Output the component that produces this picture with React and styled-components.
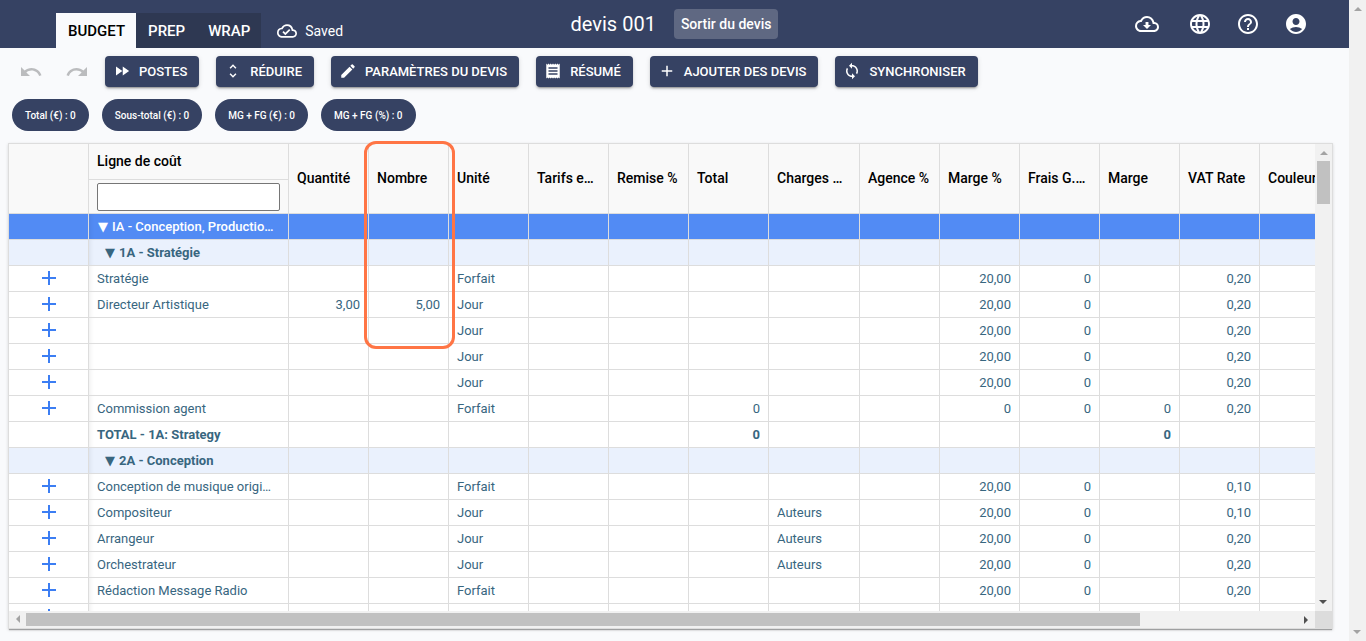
import React, { useState } from "react";
import styled, { createGlobalStyle, css } from "styled-components";
import {
  MdAccountCircle,
  MdAdd,
  MdEdit,
  MdFastForward,
  MdHelpOutline,
  MdLanguage,
  MdLoop,
  MdOutlineCloudDone,
  MdOutlineCloudDownload,
  MdReceipt,
  MdRedo,
  MdUndo,
  MdUnfoldMore,
} from "react-icons/md";

const actions = [
  { label: "Postes", icon: MdFastForward },
  { label: "Réduire", icon: MdUnfoldMore },
  { label: "Paramètres du devis", icon: MdEdit },
  { label: "Résumé", icon: MdReceipt },
  { label: "Ajouter des devis", icon: MdAdd },
  { label: "Synchroniser", icon: MdLoop },
];

const totals = ["Total (€) : 0", "Sous-total (€) : 0", "MG + FG (€) : 0", "MG + FG (%) : 0"];

const columns = [
  { key: "add", label: "", width: 80 },
  { key: "line", label: "Ligne de coût", width: 200, filter: true },
  { key: "qty", label: "Quantité", width: 80, right: true },
  { key: "nb", label: "Nombre", width: 80, right: true },
  { key: "unit", label: "Unité", width: 80 },
  { key: "rate", label: "Tarifs e…", width: 80, right: true },
  { key: "discount", label: "Remise %", width: 80, right: true },
  { key: "total", label: "Total", width: 80, right: true },
  { key: "charges", label: "Charges …", width: 91 },
  { key: "agency", label: "Agence %", width: 80, right: true },
  { key: "margin", label: "Marge %", width: 80, right: true },
  { key: "fees", label: "Frais G.…", width: 80, right: true },
  { key: "marginTotal", label: "Marge", width: 80, right: true },
  { key: "vat", label: "VAT Rate", width: 80, right: true },
  { key: "color", label: "Couleur", width: 80 },
];

const item = (line, unit, more) => ({ line, unit, margin: "20,00", fees: "0", vat: "0,20", ...more });

const rows = [
  { kind: "section", line: "IA - Conception, Productio…" },
  { kind: "group", line: "1A - Stratégie" },
  item("Stratégie", "Forfait"),
  item("Directeur Artistique", "Jour", { qty: "3,00", nb: "5,00" }),
  item("", "Jour"),
  item("", "Jour"),
  item("", "Jour"),
  item("Commission agent", "Forfait", { total: "0", margin: "0", marginTotal: "0" }),
  { kind: "total", line: "TOTAL - 1A: Strategy", total: "0", marginTotal: "0" },
  { kind: "group", line: "2A - Conception" },
  item("Conception de musique origi…", "Forfait", { vat: "0,10" }),
  item("Compositeur", "Jour", { charges: "Auteurs", vat: "0,10" }),
  item("Arrangeur", "Jour", { charges: "Auteurs" }),
  item("Orchestrateur", "Jour", { charges: "Auteurs" }),
  item("Rédaction Message Radio", "Forfait"),
  {},
];

const App = () => {
  const [filter, setFilter] = useState("");

  return (
    <Page>
      <GlobalStyle />
      <Main>
        <Header>
          <HeaderLeft>
            <Tabs>
              <Tab $active>BUDGET</Tab>
              <Tab>PREP</Tab>
              <Tab>WRAP</Tab>
            </Tabs>
            <Saved>
              <MdOutlineCloudDone size={20} />
              Saved
            </Saved>
          </HeaderLeft>
          <HeaderCenter>
            <Title>devis 001</Title>
            <ExitButton>Sortir du devis</ExitButton>
          </HeaderCenter>
          <HeaderRight>
            <HeaderIcon aria-label="Télécharger"><MdOutlineCloudDownload /></HeaderIcon>
            <HeaderIcon aria-label="Langue"><MdLanguage /></HeaderIcon>
            <HeaderIcon aria-label="Aide"><MdHelpOutline /></HeaderIcon>
            <HeaderIcon aria-label="Compte"><MdAccountCircle /></HeaderIcon>
          </HeaderRight>
        </Header>

        <Toolbar>
          <History>
            <HistoryButton aria-label="Annuler" disabled><MdUndo /></HistoryButton>
            <HistoryButton aria-label="Rétablir" disabled><MdRedo /></HistoryButton>
          </History>
          <Actions>
            {actions.map(({ label, icon: Icon }) => (
              <ActionButton key={label}>
                <Icon size={18} />
                {label}
              </ActionButton>
            ))}
          </Actions>
        </Toolbar>

        <Chips>
          {totals.map((text) => <Chip key={text}>{text}</Chip>)}
        </Chips>

        <Frame>
          <Viewport>
            <Table>
              <colgroup>
                {columns.map((c) => <Col key={c.key} $width={c.width} />)}
              </colgroup>
              <thead>
                <tr>
                  {columns.map((c) => (
                    <HeadCell key={c.key} $filter={c.filter}>
                      {c.filter ? (
                        <>
                          <FilterLabel htmlFor="line-filter">{c.label}</FilterLabel>
                          <FilterBox>
                            <FilterInput
                              id="line-filter"
                              value={filter}
                              onChange={(e) => setFilter(e.target.value)}
                            />
                          </FilterBox>
                        </>
                      ) : c.label}
                    </HeadCell>
                  ))}
                </tr>
              </thead>
              <tbody>
                {rows.map((row, i) => (
                  <Row key={i} $kind={row.kind}>
                    {columns.map((c) => (
                      <Cell key={c.key} $right={c.right} $frozen={c.key === "line"}>
                        {c.key === "add" && !row.kind && (
                          <AddButton aria-label="Ajouter une ligne"><MdAdd /></AddButton>
                        )}
                        {c.key === "line" && (row.kind === "section" || row.kind === "group") && (
                          <Caret $indent={row.kind === "group"}>▼</Caret>
                        )}
                        {row[c.key]}
                      </Cell>
                    ))}
                  </Row>
                ))}
              </tbody>
            </Table>
          </Viewport>
          <ScrollBar>
            <Arrow $dir="up" />
            <Track><Thumb $length="10%" /></Track>
            <Arrow $dir="down" $enabled />
          </ScrollBar>
          <ScrollBar $horizontal>
            <Arrow $dir="left" />
            <Track $horizontal><Thumb $horizontal $length="87.6%" /></Track>
            <Arrow $dir="right" $enabled />
          </ScrollBar>
          <Corner />
          <Highlight />
        </Frame>
      </Main>
      <ScrollBar>
        <Arrow $dir="up" />
        <Track />
        <Arrow $dir="down" />
      </ScrollBar>
    </Page>
  );
};

const GlobalStyle = createGlobalStyle`
  * {
    box-sizing: border-box;
  }
  body {
    margin: 0;
    font-family: Roboto, "Liberation Sans", sans-serif;
    background: #f9fafc;
  }
  button, input {
    font-family: inherit;
  }
  button {
    border: 0;
    cursor: pointer;
  }
`;

const Page = styled.div`
  display: flex;
  height: 100vh;
  overflow: hidden;
`;

const Main = styled.main`
  flex: 1;
  min-width: 0;
  display: flex;
  flex-direction: column;
`;

const Header = styled.header`
  display: grid;
  grid-template-columns: 1fr auto 1fr;
  height: 48px;
  flex-shrink: 0;
  background: #364263;
  color: white;
`;

const HeaderLeft = styled.div`
  display: flex;
  align-items: flex-end;
  padding-left: 56px;
`;

const Tabs = styled.nav`
  display: flex;
  background: #2e3852;
`;

const Tab = styled.button`
  height: 35px;
  padding: 0 11px 0 12px;
  font-size: 15px;
  font-weight: 500;
  color: ${(p) => (p.$active ? "black" : "white")};
  background: ${(p) => (p.$active ? "#f9fafc" : "transparent")};
`;

const Saved = styled.div`
  display: flex;
  align-items: center;
  gap: 8px;
  height: 35px;
  padding-left: 16px;
  font-size: 14px;
`;

const HeaderCenter = styled.div`
  display: flex;
  align-items: center;
  gap: 18px;
`;

const Title = styled.h1`
  margin: 0;
  font-size: 20px;
  font-weight: 400;
`;

const ExitButton = styled.button`
  height: 30px;
  padding: 0 7px;
  border-radius: 4px;
  font-size: 14px;
  font-weight: 500;
  color: white;
  background: #5f6882;
`;

const HeaderRight = styled.div`
  display: flex;
  align-items: center;
  justify-content: flex-end;
  padding-right: 29px;
`;

const HeaderIcon = styled.button`
  display: flex;
  padding: 12px;
  font-size: 24px;
  color: white;
  background: none;
  &:first-child {
    margin-right: 5px;
  }
`;

const Toolbar = styled.div`
  display: flex;
  gap: 16px;
  padding: 8px 16px 0 19px;
`;

const History = styled.div`
  display: flex;
  align-items: center;
  gap: 22px;
`;

const HistoryButton = styled.button`
  display: flex;
  padding: 0;
  font-size: 24px;
  color: #bbbcbe;
  background: none;
`;

const Actions = styled.div`
  display: flex;
  gap: 17px;
`;

const ActionButton = styled.button`
  display: flex;
  align-items: center;
  gap: 8px;
  height: 31px;
  padding: 0 12px 1px 8px;
  border-radius: 4px;
  font-size: 13px;
  font-weight: 500;
  text-transform: uppercase;
  white-space: nowrap;
  color: white;
  background: #364263;
  box-shadow: 0 3px 1px -2px rgba(0, 0, 0, 0.2), 0 2px 2px 0 rgba(0, 0, 0, 0.14), 0 1px 5px 0 rgba(0, 0, 0, 0.12);
`;

const Chips = styled.div`
  display: flex;
  gap: 13px;
  padding: 12px;
`;

const Chip = styled.div`
  display: flex;
  align-items: center;
  height: 32px;
  padding: 0 13px;
  border-radius: 16px;
  font-size: 10px;
  font-weight: 500;
  white-space: nowrap;
  color: white;
  background: #364263;
`;

const Frame = styled.section`
  position: relative;
  flex: 1;
  min-height: 0;
  display: grid;
  grid-template-columns: minmax(0, 1fr) 17px;
  grid-template-rows: minmax(0, 1fr) 17px;
  margin: 0 16px 12px 8px;
  border: 1px solid #dddddd;
  box-shadow: 0 2px 1px -1px rgba(0, 0, 0, 0.3), 0 1px 3px 0 rgba(0, 0, 0, 0.14);
`;

const Viewport = styled.div`
  overflow: hidden;
  background: white;
`;

const Table = styled.table`
  width: 1331px;
  table-layout: fixed;
  border-collapse: separate;
  border-spacing: 0;
`;

const Col = styled.col`
  width: ${(p) => p.$width}px;
`;

const cellBase = css`
  padding: 0 8px;
  border-right: 1px solid #dddddd;
  border-bottom: 1px solid #dddddd;
  overflow: hidden;
  text-overflow: ellipsis;
  white-space: nowrap;
`;

const HeadCell = styled.th`
  ${cellBase}
  height: 70px;
  padding: ${(p) => (p.$filter ? "0" : "0 8px 2px")};
  font-size: 14px;
  font-weight: 500;
  text-align: left;
  color: black;
  background: #f9f9f9;
`;

const FilterLabel = styled.label`
  display: block;
  height: 36px;
  padding: 0 8px;
  line-height: 35px;
  border-bottom: 1px solid #dddddd;
`;

const FilterBox = styled.div`
  display: flex;
  padding: 3px 8px 2px;
`;

const FilterInput = styled.input`
  width: 100%;
  height: 28px;
  border: 1px solid #767676;
  border-radius: 2px;
  background: white;
`;

const Cell = styled.td`
  ${cellBase}
  height: 26px;
  text-align: ${(p) => (p.$right ? "right" : "left")};
  ${(p) => p.$frozen && "box-shadow: inset 5px 0 5px -4px rgba(0, 0, 0, 0.08);"}
`;

const Row = styled.tr`
  font-size: 13px;
  color: #38667f;
  ${(p) => p.$kind === "section" && css`
    font-weight: 500;
    color: white;
    background: #528bf4;
  `}
  ${(p) => p.$kind === "group" && css`
    font-weight: 700;
    background: #eaf1fd;
  `}
  ${(p) => p.$kind === "total" && "font-weight: 700;"}
`;

const Caret = styled.span`
  margin-right: 4px;
  padding-left: ${(p) => (p.$indent ? 8 : 1)}px;
  font-family: "DejaVu Sans", sans-serif;
  font-weight: 400;
  line-height: 1;
`;

const AddButton = styled.button`
  display: flex;
  margin: 0 auto;
  padding: 0 0 1px;
  font-size: 24px;
  color: #3c7ef3;
  background: none;
`;

const ScrollBar = styled.div`
  display: flex;
  flex-direction: ${(p) => (p.$horizontal ? "row" : "column")};
  flex: 0 0 17px;
  background: #f1f1f1;
`;

const Track = styled.div`
  flex: 1;
  padding: ${(p) => (p.$horizontal ? "2px 0" : "0 2px")};
`;

const Thumb = styled.div`
  width: ${(p) => (p.$horizontal ? p.$length : "100%")};
  height: ${(p) => (p.$horizontal ? "100%" : p.$length)};
  background: #c1c1c1;
`;

const turns = { up: 0, right: 90, down: 180, left: 270 };

const Arrow = styled.div`
  display: flex;
  align-items: center;
  justify-content: center;
  width: 17px;
  height: 17px;
  transform: rotate(${(p) => turns[p.$dir]}deg);
  &::before {
    content: "";
    border: 4px solid transparent;
    border-top-width: 0;
    border-bottom-color: ${(p) => (p.$enabled ? "#505050" : "#a3a3a3")};
  }
`;

const Corner = styled.div`
  background: #dcdcdc;
`;

// outline drawn over the "Nombre" column
const Highlight = styled.div`
  position: absolute;
  top: -3px;
  left: 355px;
  width: 91px;
  height: 208px;
  border: 3px solid #ff7545;
  border-radius: 12px;
  pointer-events: none;
`;

export default App;
